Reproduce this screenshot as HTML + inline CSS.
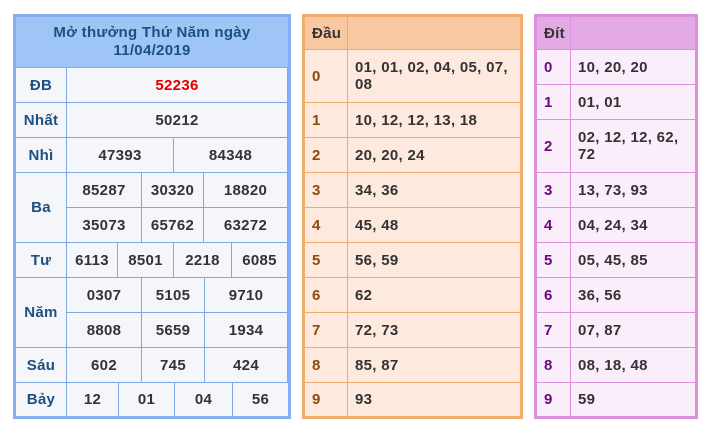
<!DOCTYPE html><html><head><meta charset="utf-8"><style>
body{margin:0;width:711px;height:433px;background:#fff;position:relative;overflow:hidden;font-family:"Liberation Sans",Arial,sans-serif;font-weight:bold;font-size:15px;letter-spacing:0.3px;}
.c{position:absolute;box-sizing:border-box;display:flex;align-items:center;justify-content:center;color:#333;}
.b{border-right:1px solid #7ea8e6;border-bottom:1px solid #7ea8e6;background:#f4f6fa;}
.l{color:#1d4f80;}
.o{border-right:1px solid #f0aa6c;border-bottom:1px solid #f0aa6c;background:#fde9dd;justify-content:flex-start;padding-left:7px;line-height:17px;}
.p{border-right:1px solid #d992d9;border-bottom:1px solid #d992d9;background:#fbeefb;justify-content:flex-start;padding-left:7px;line-height:17px;}
.frame{position:absolute;box-sizing:border-box;}
</style></head><body>
<div class="frame" style="left:13px;top:14px;width:278px;height:405px;border:3px solid #85aef0;"></div>
<div class="c" style="left:16px;top:17px;width:272px;height:51px;background:#9ec5f6;color:#1d4f80;text-align:center;line-height:18px;border-bottom:1px solid #7ea8e6">Mở thưởng Thứ Năm ngày<br>11/04/2019</div>
<div class="c b l" style="left:16px;top:68px;width:51px;height:35px">ĐB</div>
<div class="c b l" style="left:16px;top:103px;width:51px;height:35px">Nhất</div>
<div class="c b l" style="left:16px;top:138px;width:51px;height:35px">Nhì</div>
<div class="c b l" style="left:16px;top:173px;width:51px;height:70px">Ba</div>
<div class="c b l" style="left:16px;top:243px;width:51px;height:35px">Tư</div>
<div class="c b l" style="left:16px;top:278px;width:51px;height:70px">Năm</div>
<div class="c b l" style="left:16px;top:348px;width:51px;height:35px">Sáu</div>
<div class="c b l" style="left:16px;top:383px;width:51px;height:33px;border-bottom:none">Bảy</div>
<div class="c b" style="left:67px;top:68px;width:221px;height:35px;color:#e00000">52236</div>
<div class="c b" style="left:67px;top:103px;width:221px;height:35px">50212</div>
<div class="c b" style="left:67px;top:138px;width:107px;height:35px">47393</div>
<div class="c b" style="left:174px;top:138px;width:114px;height:35px">84348</div>
<div class="c b" style="left:67px;top:173px;width:75px;height:35px">85287</div>
<div class="c b" style="left:142px;top:173px;width:62px;height:35px">30320</div>
<div class="c b" style="left:204px;top:173px;width:84px;height:35px">18820</div>
<div class="c b" style="left:67px;top:208px;width:75px;height:35px">35073</div>
<div class="c b" style="left:142px;top:208px;width:62px;height:35px">65762</div>
<div class="c b" style="left:204px;top:208px;width:84px;height:35px">63272</div>
<div class="c b" style="left:67px;top:243px;width:51px;height:35px">6113</div>
<div class="c b" style="left:118px;top:243px;width:56px;height:35px">8501</div>
<div class="c b" style="left:174px;top:243px;width:58px;height:35px">2218</div>
<div class="c b" style="left:232px;top:243px;width:56px;height:35px">6085</div>
<div class="c b" style="left:67px;top:278px;width:75px;height:35px">0307</div>
<div class="c b" style="left:142px;top:278px;width:63px;height:35px">5105</div>
<div class="c b" style="left:205px;top:278px;width:83px;height:35px">9710</div>
<div class="c b" style="left:67px;top:313px;width:75px;height:35px">8808</div>
<div class="c b" style="left:142px;top:313px;width:63px;height:35px">5659</div>
<div class="c b" style="left:205px;top:313px;width:83px;height:35px">1934</div>
<div class="c b" style="left:67px;top:348px;width:75px;height:35px">602</div>
<div class="c b" style="left:142px;top:348px;width:63px;height:35px">745</div>
<div class="c b" style="left:205px;top:348px;width:83px;height:35px">424</div>
<div class="c b" style="left:67px;top:383px;width:52px;height:33px;border-bottom:none">12</div>
<div class="c b" style="left:119px;top:383px;width:56px;height:33px;border-bottom:none">01</div>
<div class="c b" style="left:175px;top:383px;width:58px;height:33px;border-bottom:none">04</div>
<div class="c b" style="left:233px;top:383px;width:55px;height:33px;border-bottom:none;border-right:none">56</div>

<div class="frame" style="left:302px;top:14px;width:221px;height:405px;border:3px solid #f2ac6e;"></div>
<div class="c o" style="left:305px;top:17px;width:43px;height:33px;background:#f8c9a0;color:#333">Đầu</div>
<div class="c o" style="left:348px;top:17px;width:172px;height:33px;background:#f8c9a0;border-right:none"></div>
<div id="dau"></div>
<div class="frame" style="left:534px;top:14px;width:164px;height:405px;border:3px solid #dc8fdc;"></div>
<div class="c p" style="left:537px;top:17px;width:34px;height:33px;background:#e2a9e4;color:#333">Đít</div>
<div class="c p" style="left:571px;top:17px;width:124px;height:33px;background:#e2a9e4;border-right:none"></div>
<script>
var d=[["0","01, 01, 02, 04, 05, 07,<br>08",50,53],["1","10, 12, 12, 13, 18",103,35],["2","20, 20, 24",138,35],["3","34, 36",173,35],["4","45, 48",208,35],["5","56, 59",243,35],["6","62",278,35],["7","72, 73",313,35],["8","85, 87",348,35],["9","93",383,33]];
var t=[["0","10, 20, 20",50,35],["1","01, 01",85,35],["2","02, 12, 12, 62,<br>72",120,53],["3","13, 73, 93",173,35],["4","04, 24, 34",208,35],["5","05, 45, 85",243,35],["6","36, 56",278,35],["7","07, 87",313,35],["8","08, 18, 48",348,35],["9","59",383,33]];
var h="";
d.forEach(function(r,i){var bb=i==9?"border-bottom:none;":"";
h+='<div class="c o" style="left:305px;top:'+r[2]+'px;width:43px;height:'+r[3]+'px;color:#8a4a10;'+bb+'">'+r[0]+'</div>';
h+='<div class="c o" style="left:348px;top:'+r[2]+'px;width:172px;height:'+r[3]+'px;border-right:none;'+bb+'">'+r[1]+'</div>';});
t.forEach(function(r,i){var bb=i==9?"border-bottom:none;":"";
h+='<div class="c p" style="left:537px;top:'+r[2]+'px;width:34px;height:'+r[3]+'px;color:#6a0a7a;'+bb+'">'+r[0]+'</div>';
h+='<div class="c p" style="left:571px;top:'+r[2]+'px;width:124px;height:'+r[3]+'px;border-right:none;'+bb+'">'+r[1]+'</div>';});
document.getElementById("dau").outerHTML=h;
</script>
</body></html>
